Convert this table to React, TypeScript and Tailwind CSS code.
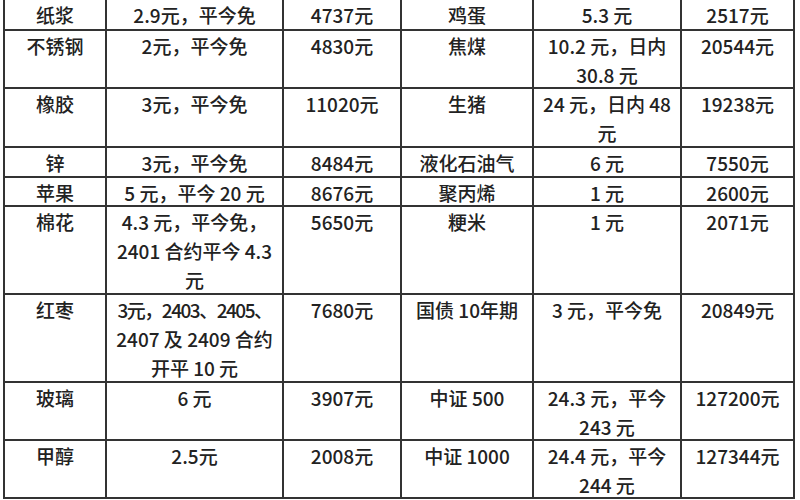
import React from "react";

type Row = { h: string; cells: string[][] };

const rows: Row[] = [
  { h: "h-[31px]", cells: [["纸浆"], ["2.9元，平今免"], ["4737元"], ["鸡蛋"], ["5.3 元"], ["2517元"]] },
  { h: "h-[58px]", cells: [["不锈钢"], ["2元，平今免"], ["4830元"], ["焦煤"], ["10.2 元，日内", "30.8 元"], ["20544元"]] },
  { h: "h-[59px]", cells: [["橡胶"], ["3元，平今免"], ["11020元"], ["生猪"], ["24 元，日内 48", "元"], ["19238元"]] },
  { h: "h-[30px]", cells: [["锌"], ["3元，平今免"], ["8484元"], ["液化石油气"], ["6 元"], ["7550元"]] },
  { h: "h-[29px]", cells: [["苹果"], ["5 元，平今 20 元"], ["8676元"], ["聚丙烯"], ["1 元"], ["2600元"]] },
  { h: "h-[88px]", cells: [["棉花"], ["4.3 元，平今免，", "2401 合约平今 4.3", "元"], ["5650元"], ["粳米"], ["1 元"], ["2071元"]] },
  { h: "h-[88px]", cells: [["红枣"], ["3元，2403、2405、", "2407 及 2409 合约", "开平 10 元"], ["7680元"], ["国债 10年期"], ["3 元，平今免"], ["20849元"]] },
  { h: "h-[58px]", cells: [["玻璃"], ["6 元"], ["3907元"], ["中证 500"], ["24.3 元，平今", "243 元"], ["127200元"]] },
  { h: "h-[58px]", cells: [["甲醇"], ["2.5元"], ["2008元"], ["中证 1000"], ["24.4 元，平今", "244 元"], ["127344元"]] },
];

export default function App() {
  return (
    <div className="w-[800px] h-[500px] overflow-hidden bg-white pl-[3px]">
      <div
        className="w-[792px] border-l-2 border-r-2 border-[#333] text-[19px] leading-[29px] font-medium text-[#222]"
        style={{ fontFamily: '"Noto Sans CJK SC", "Noto Sans", sans-serif' }}
      >
        {rows.map((r, i) => (
          <div
            key={i}
            className={`${r.h} grid grid-cols-[102px_177px_118px_132px_148px_111px] border-b-2 border-[#333]`}
          >
            {r.cells.map((c, j) => (
              <div
                key={j}
                className={`flex flex-col items-center whitespace-nowrap overflow-hidden ${j < 5 ? "border-r-2 border-[#333]" : ""}`}
              >
                {c.map((line, k) => (
                  <span key={k} className={line.startsWith("3元，2403") ? "tracking-[-1.5px]" : ""}>
                    {line}
                  </span>
                ))}
              </div>
            ))}
          </div>
        ))}
      </div>
    </div>
  );
}
